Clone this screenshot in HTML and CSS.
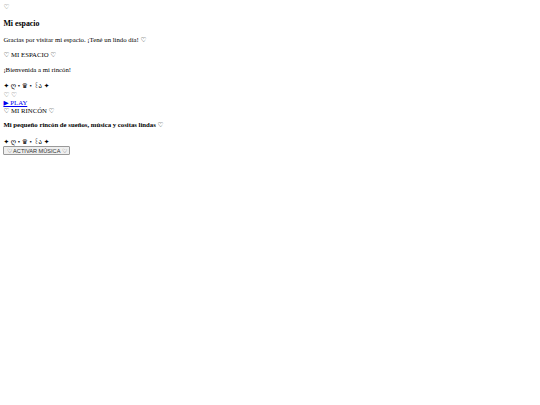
FILE: index.html
```html
<!DOCTYPE html>
<html lang="es">
<head>
<meta charset="utf-8">
<title>Mi espacio</title>
<link rel="stylesheet" href="styles.css">
</head>
<body>
<div class="heart">♡</div>
<h3 class="title">Mi espacio</h3>
<p class="text">Gracias por visitar mi espacio. ¡Tené un lindo día! ♡</p>
<p class="text">♡ MI ESPACIO ♡</p>
<p class="text">¡Bienvenida a mi rincón!</p>
<div class="stack">
  <div class="deco">✦ ღ • ♛︎ • ꒰ა ✦</div>
  <div class="hearts">♡ ♡</div>
  <a class="play" href="#">▶ PLAY</a>
  <div class="rincon">♡ MI RINCÓN ♡</div>
</div>
<h4 class="subtitle">Mi pequeño rincón de sueños, música y cositas lindas ♡</h4>
<div class="deco">✦ ღ • ♛︎ • ꒰ა ✦</div>
<button class="music">♡ ACTIVAR MÚSICA ♡</button>
</body>
</html>
```
FILE: styles.css
```css
html {
  background: #ffffff;
}
body {
  margin: 3.375px;
  font-family: "Liberation Serif", "DejaVu Serif", serif;
  font-size: 6.75px;
  color: #000000;
}
.heart {
  color: #555555;
}
.title {
  font-size: 1.17em;
  margin: 1em 0;
}
.text {
  margin: 1em 0;
}
.stack {
  margin-top: 9.5px;
  line-height: 8.4px;
}
.deco {
  font-family: "Liberation Serif", "DejaVu Sans", serif;
}
.hearts {
  color: #555555;
}
.play {
  color: #0000ee;
  text-decoration: underline;
}
.subtitle {
  font-size: 1em;
  margin: 4.75px 0 8.75px;
}
.music {
  font-family: "Liberation Sans", Arial, sans-serif;
  font-size: 5.625px;
  padding: 0.4px 2.5px;
  border: 0.85px solid #999999;
  border-radius: 1px;
  background: #efefef;
  color: #333333;
}
```
